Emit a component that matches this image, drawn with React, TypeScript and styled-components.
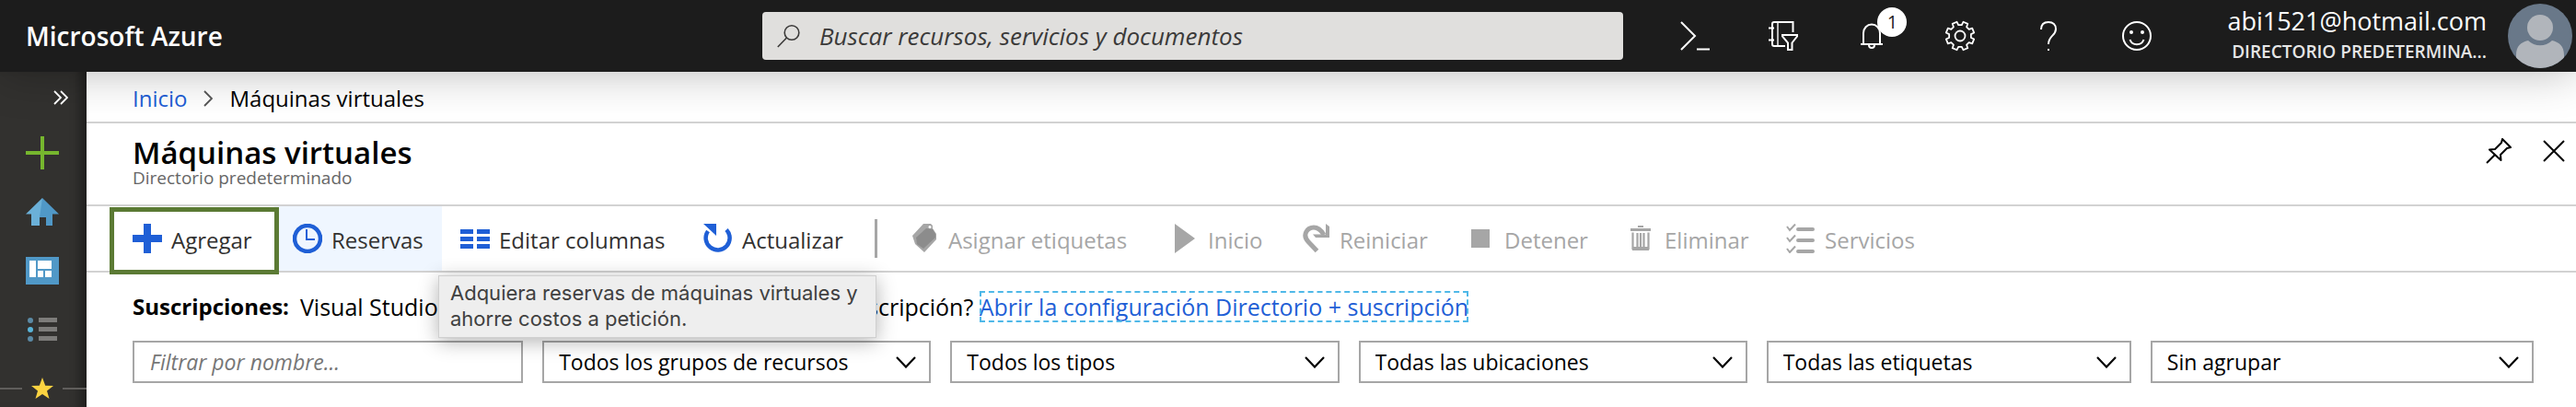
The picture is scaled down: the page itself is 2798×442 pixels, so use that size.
import React from "react";
import styled, { createGlobalStyle, css } from "styled-components";

const GlobalStyle = createGlobalStyle`
  *, *::before, *::after { box-sizing: border-box; }
  body {
    margin: 0;
    background: #ffffff;
    color: #000000;
    font-family: "Open Sans", "Noto Sans", sans-serif;
    font-size: 24px;
    line-height: 32px;
  }
  button, input, select { font: inherit; color: inherit; }
  svg { display: block; flex: none; }
`;

const Shell = styled.div`
  display: flex;
  flex-direction: column;
  height: 100vh;
  overflow: hidden;
`;

/* ---------- top bar ---------- */

const TopBar = styled.header`
  position: relative;
  z-index: 2;
  flex: none;
  display: flex;
  align-items: center;
  height: 78px;
  padding: 0 4px 0 28px;
  background: #1c1c1c;
  color: #ffffff;
  box-shadow: 0 0 50px rgba(0, 0, 0, 0.28);
`;

const Brand = styled.a`
  flex: 0 0 800px;
  color: inherit;
  font-size: 28px;
  font-weight: 600;
  text-decoration: none;
`;

const SearchBox = styled.label`
  flex: 1 1 0;
  display: flex;
  align-items: center;
  gap: 20px;
  height: 52px;
  padding: 0 16px;
  border-radius: 4px;
  background: #e0dfdd;
  color: #3b3a39;
`;

const SearchInput = styled.input`
  flex: 1;
  min-width: 0;
  padding: 0;
  border: 0;
  outline: 0;
  background: transparent;
  font-size: 26px;
  font-style: italic;
  &::placeholder { color: #3b3a39; opacity: 1; }
`;

const TopActions = styled.nav`
  flex: none;
  display: flex;
  margin-left: 30px;
`;

const TopButton = styled.button`
  position: relative;
  display: flex;
  align-items: center;
  justify-content: center;
  width: 96px;
  height: 76px;
  padding: 0;
  border: 0;
  background: transparent;
`;

const Badge = styled.span`
  position: absolute;
  top: 7px;
  right: 10px;
  width: 32px;
  height: 32px;
  border-radius: 50%;
  background: #ffffff;
  color: #1c1c1c;
  font-size: 20px;
  line-height: 31px;
  text-align: center;
`;

const Account = styled.button`
  flex: none;
  display: flex;
  align-items: center;
  gap: 23px;
  padding: 0;
  margin-left: 50px;
  border: 0;
  background: transparent;
  text-align: right;
`;

const AccountText = styled.span`
  display: flex;
  flex-direction: column;
`;

const Email = styled.span`
  font-size: 27px;
  line-height: 34px;
`;

const Directory = styled.span`
  color: #e6e6e6;
  font-size: 19px;
  font-weight: 600;
  line-height: 32px;
`;

/* ---------- side bar ---------- */

const Body = styled.div`
  flex: 1;
  display: flex;
  min-height: 0;
`;

const SideBar = styled.nav`
  flex: none;
  display: flex;
  flex-direction: column;
  width: 94px;
  background: #32312f;
  box-shadow: inset -14px 0 12px -8px rgba(0, 0, 0, 0.4);
`;

const SideButton = styled.button<{ $toggle?: boolean }>`
  flex: none;
  display: flex;
  align-items: center;
  justify-content: ${(p) => (p.$toggle ? "flex-end" : "center")};
  height: ${(p) => (p.$toggle ? 56 : 64)}px;
  padding: ${(p) => (p.$toggle ? "0 20px 0 0" : "0 2px 0 0")};
  border: 0;
  background: transparent;
`;

const FavoritesDivider = styled.div`
  flex: none;
  display: flex;
  align-items: center;
  gap: 9px;
  height: 64px;
  &::before, &::after {
    content: "";
    height: 2px;
    background: #605e5c;
  }
  &::before { width: 24px; }
  &::after { flex: 1; }
`;

/* ---------- blade ---------- */

const Blade = styled.main`
  flex: 1;
  min-width: 0;
`;

const Breadcrumb = styled.nav`
  display: flex;
  align-items: center;
  gap: 18px;
  height: 56px;
  padding: 4px 50px 0;
  border-bottom: 2px solid #d2d2d2;
`;

const BlueLink = styled.a<{ $focused?: boolean }>`
  color: #1f5fd6;
  text-decoration: none;
  ${(p) =>
    p.$focused &&
    css`
      outline: 2px dashed #4fb8e8;
      outline-offset: -2px;
    `}
`;

const TitleBar = styled.div`
  display: flex;
  justify-content: space-between;
  height: 90px;
  padding: 14px 12px 0 50px;
  border-bottom: 2px solid #d2d2d2;
`;

const Title = styled.h1`
  margin: 0;
  font-size: 33px;
  font-weight: 600;
  line-height: 36px;
`;

const Subtitle = styled.p`
  margin: 0;
  color: #666666;
  font-size: 19px;
  line-height: 18px;
`;

const BladeActions = styled.div`
  display: flex;
  align-items: flex-start;
  gap: 34px;
  padding-top: 2px;
`;

const IconButton = styled.button`
  display: flex;
  align-items: center;
  height: 28px;
  padding: 0;
  border: 0;
  background: transparent;
`;

const CommandBar = styled.div`
  display: flex;
  align-items: center;
  height: 72px;
  padding-left: 30px;
  border-bottom: 2px solid #d2d2d2;
`;

const Command = styled.button<{ $width: number; $hovered?: boolean; $marked?: boolean }>`
  position: relative;
  display: flex;
  align-items: center;
  gap: 10px;
  min-width: ${(p) => p.$width}px;
  height: 70px;
  padding: 0 20px;
  border: 0;
  background: ${(p) => (p.$hovered ? "#eff6ff" : "transparent")};
  color: #323130;
  white-space: nowrap;
  svg { color: #1f5fd6; }
  &:disabled { color: #a6a6a6; }
  &:disabled svg { color: #a6a6a6; }
  ${(p) =>
    p.$marked &&
    css`
      z-index: 1;
      &::after {
        content: "";
        position: absolute;
        inset: 1px -5px -4px;
        border: 5px solid #5b7a34;
      }
    `}
`;

const CommandLabel = styled.span`
  padding-top: 4px;
`;

const Separator = styled.span`
  width: 3px;
  height: 42px;
  margin: 0 15px 0 11px;
  background: #a6a6a6;
`;

const Tooltip = styled.div`
  position: absolute;
  z-index: 3;
  top: 75px;
  left: 178px;
  width: 476px;
  padding: 4px 12px 6px;
  border: 1px solid #cfcfcf;
  background: #eeeeee;
  box-shadow: 0 4px 20px rgba(0, 0, 0, 0.3);
  color: #404040;
  font-family: Inter, "Open Sans", sans-serif;
  font-size: 22px;
  line-height: 28px;
  text-align: left;
  white-space: normal;
`;

const CommandSlot = styled.div`
  position: relative;
`;

const Content = styled.section`
  padding: 20px 46px 0 50px;
`;

const Subscriptions = styled.p`
  display: flex;
  margin: 0;
  font-size: 25px;
  line-height: 34px;
  white-space: pre;
  strong { margin-right: 12px; font-size: 24px; }
`;

const Filters = styled.form`
  display: grid;
  grid-template-columns: 424fr 422fr 422fr 422fr 396fr 416fr;
  gap: 21px;
  margin-top: 20px;
`;

const FilterInput = styled.input`
  min-width: 0;
  height: 46px;
  padding: 0 17px;
  border: 2px solid #a6a6a6;
  border-radius: 0;
  background: #ffffff;
  font-size: 23px;
  font-style: italic;
  &::placeholder { color: #767676; opacity: 1; }
`;

const SelectWrap = styled.div`
  display: grid;
  align-items: center;
  > * { grid-area: 1 / 1; }
  svg { justify-self: end; margin-right: 16px; pointer-events: none; }
`;

const FilterSelect = styled.select`
  appearance: none;
  width: 100%;
  height: 46px;
  padding: 0 44px 0 16px;
  border: 2px solid #a6a6a6;
  border-radius: 0;
  background: #ffffff;
  font-size: 23px;
`;

/* ---------- icons ---------- */

const SearchIcon = () => (
  <svg width="26" height="26" viewBox="0 0 26 26" fill="none" stroke="#3b3a39" strokeWidth="1.6">
    <circle cx="16" cy="9.5" r="7.8" />
    <path d="M10.5 15 L0.8 25" />
  </svg>
);

const ShellIcon = () => (
  <svg width="32" height="32" viewBox="0 0 32 32" fill="none" stroke="#fff" strokeWidth="2">
    <path d="M1 1 L16 16 L1 31 M18 30.5 H32" />
  </svg>
);

const DirectoryIcon = () => (
  <svg width="32" height="32" viewBox="0 0 32 32" fill="none" stroke="#fff" strokeWidth="2">
    <path d="M26.500 12 V1 H6 Q4 1 4 3 V25 Q4 27 6 27 H18" />
    <path d="M10 1 V27" strokeWidth="1.400" />
    <path d="M0 7.500 H6 M0 20.500 H6" />
    <path d="M15 15 H31 V16.500 L25.500 23.500 V31 H21 V23.500 L15 16.500 Z" />
  </svg>
);

const BellIcon = () => (
  <svg width="24" height="30" viewBox="0 0 24 30" fill="none" stroke="#fff" strokeWidth="2">
    <path d="M3 24 V12 A9 9.500 0 0 1 21 12 V24 M0 24 H24" />
    <path d="M9 25 A3 3 0 0 0 15 25" />
  </svg>
);

const gearPath = (() => {
  const points: string[] = [];
  for (let i = 0; i < 8; i++) {
    const base = (i * Math.PI) / 4 + Math.PI / 8;
    [[-0.24, 12], [-0.17, 15.6], [0.17, 15.6], [0.24, 12]].forEach(([d, r]) => {
      points.push(`${(17 + r * Math.sin(base + d)).toFixed(2)} ${(17 + r * Math.cos(base + d)).toFixed(2)}`);
    });
  }
  return `M${points.join("L")}Z`;
})();

const GearIcon = () => (
  <svg width="34" height="34" viewBox="0 0 34 34" fill="none" stroke="#fff" strokeWidth="1.800" strokeLinejoin="round">
    <path d={gearPath} />
    <circle cx="17" cy="17" r="5.500" />
  </svg>
);

const HelpIcon = () => (
  <svg width="18" height="32" viewBox="0 0 18 32" fill="none" stroke="#fff" strokeWidth="2">
    <path d="M1 9 C1 4 4 1 9 1 C14 1 17 4 17 8.500 C17 16 9 15.500 9 25" />
    <path d="M9 30 V32" />
  </svg>
);

const SmileIcon = () => (
  <svg width="32" height="32" viewBox="0 0 32 32" fill="none" stroke="#fff" strokeWidth="2">
    <circle cx="16" cy="16" r="15" />
    <path d="M8.500 20 C11 27 21 27 23.500 20" />
    <circle cx="10" cy="12" r="2" fill="#fff" stroke="none" />
    <circle cx="22" cy="12" r="2" fill="#fff" stroke="none" />
  </svg>
);

const Avatar = () => (
  <svg width="70" height="70" viewBox="0 0 70 70">
    <defs>
      <clipPath id="avatar-round"><circle cx="35" cy="35" r="35" /></clipPath>
    </defs>
    <g clipPath="url(#avatar-round)">
      <rect width="70" height="70" fill="#697889" />
      <path d="M9 70 V56 C9 46 14 42 22 40 C29 47 41 47 48 40 C56 42 61 46 61 56 V70 Z" fill="#b1b5bb" />
      <circle cx="35" cy="26" r="14" fill="#b1b5bb" />
    </g>
  </svg>
);

const ExpandIcon = () => (
  <svg width="16" height="16" viewBox="0 0 16 16" fill="none" stroke="#fff" strokeWidth="1.800">
    <path d="M1 1 L8 8 L1 15 M8 1 L15 8 L8 15" />
  </svg>
);

const CreateIcon = () => (
  <svg width="36" height="36" viewBox="0 0 36 36" fill="#76b62e">
    <path d="M16 0h4v16h16v4H20v16h-4V20H0v-4h16z" />
  </svg>
);

const HomeIcon = () => (
  <svg width="36" height="30" viewBox="0 0 36 30">
    <path d="M18 0 L0 17.500 H6 V30 H15 V21 H18 Z" fill="#6bb0d8" />
    <path d="M18 0 L36 17.500 H29 V30 H22 V21 H15 Z" fill="#5098c7" />
  </svg>
);

const DashboardIcon = () => (
  <svg width="36" height="30" viewBox="0 0 36 30">
    <path d="M0 0h36v30H0z" fill="#5098c7" />
    <path d="M4 4h7v18H4zM13 4h15v9H13zM13 15h6v7h-6zM21 15h7v7h-7z" fill="#fff" />
  </svg>
);

const ListIcon = () => (
  <svg width="32" height="26" viewBox="0 0 32 26">
    <circle cx="3" cy="3" r="3" fill="#5b8aa5" />
    <circle cx="3" cy="13" r="3" fill="#59b4d9" />
    <circle cx="3" cy="23" r="3" fill="#5b8aa5" />
    <path d="M12 0h20v5H12zM12 10h20v5H12zM12 20h20v5H12z" fill="#7d7c7a" />
  </svg>
);

const StarIcon = () => (
  <svg width="26" height="24" viewBox="0 0 26 24" fill="#fbd341">
    <path d="M13 0 L16.200 8.700 L25 9 L18 14.500 L20.500 23 L13 18 L5.500 23 L8 14.500 L1 9 L9.800 8.700 Z" />
  </svg>
);

const CrumbIcon = () => (
  <svg width="10" height="18" viewBox="0 0 10 18" fill="none" stroke="#555" strokeWidth="1.800">
    <path d="M1 1 L9 9 L1 17" />
  </svg>
);

const PinIcon = () => (
  <svg width="28" height="28" viewBox="0 0 28 28" fill="none" stroke="#000" strokeWidth="2" strokeLinejoin="round">
    <path d="M18 1 L27 10 L23 11 L16 18 L16.500 24 L4 12.500 L10 12 L17 5 Z" />
    <path d="M10 18 L1 27" />
  </svg>
);

const CloseIcon = () => (
  <svg width="24" height="24" viewBox="0 0 24 24" fill="none" stroke="#000" strokeWidth="2">
    <path d="M1 1 L23 23 M23 1 L1 23" />
  </svg>
);

const DownIcon = () => (
  <svg width="22" height="13" viewBox="0 0 22 13" fill="none" stroke="#000" strokeWidth="2.200">
    <path d="M1 1 L11 11.500 L21 1" />
  </svg>
);

const CommandIcon = ({ children }: { children: React.ReactNode }) => (
  <svg width="32" height="32" viewBox="0 0 32 32" fill="currentColor">{children}</svg>
);

const AddGlyph = () => <path d="M12 0h8v12h12v8H20v12h-8V20H0v-8h12z" />;
const ClockGlyph = () => (
  <g fill="none" stroke="currentColor">
    <circle cx="16" cy="16" r="14" strokeWidth="4.500" />
    <path d="M15 6 V17 H24" strokeWidth="2" />
  </g>
);
const ColumnsGlyph = () => (
  <path d="M0 6h14v5H0zM18 6h14v5H18zM0 14h14v5H0zM18 14h14v5H18zM0 22h14v5H0zM18 22h14v5H18z" />
);
const RefreshGlyph = () => (
  <g>
    <path d="M25 6.500 A13 13 0 1 1 5 8" fill="none" stroke="currentColor" strokeWidth="4.500" />
    <path d="M0 0 H14 V13 Z" />
  </g>
);
const TagGlyph = () => (
  <g>
    <path d="M15 0 H23 L25 2 V5 L29 11 V17 L16 31 L6 22 L3 13 Z" />
    <path d="M18 5 L25 6 L28 11 V15 L15 27 L8 22 L7 15 Z" fill="#8c8c8c" />
    <circle cx="22" cy="3.500" r="1.500" fill="#fff" />
  </g>
);
const PlayGlyph = () => <path d="M6 0 L28 16 L6 32 Z" />;
const RestartGlyph = () => (
  <g>
    <path d="M17.500 29.500 L8 19.500 C1 12 7 4 14 4 C19 4 22 7 25 12" fill="none" stroke="currentColor" strokeWidth="5" />
    <path d="M27 0 L31 3 V15 H16 L13 11.500 H27 Z" />
  </g>
);
const StopGlyph = () => <path d="M6 6h20v20H6z" />;
const TrashGlyph = () => (
  <g>
    <path d="M13 2h6v2h-6zM5 5h22v3H5z" />
    <path d="M7.500 9.500 V27 H24.500 V9.500 M12.500 10 V26 M16 10 V26 M19.500 10 V26" fill="none" stroke="currentColor" strokeWidth="2.200" />
    <path d="M7 25h18v4H7z" />
  </g>
);
const ServicesGlyph = () => (
  <g fill="none" stroke="currentColor">
    <path d="M1 3 L4 7 L10 0.500 M1 15 L4 19 L10 12.500 M1 27 L4 31 L10 24.500" strokeWidth="2" />
    <path d="M13 6 H29 M13 18 H29 M13 30 H29" strokeWidth="4" strokeLinecap="round" />
  </g>
);

const disabledCommands = [
  { label: "Asignar etiquetas", width: 282, Glyph: TagGlyph },
  { label: "Inicio", width: 143, Glyph: PlayGlyph },
  { label: "Reiniciar", width: 179, Glyph: RestartGlyph },
  { label: "Detener", width: 174, Glyph: StopGlyph },
  { label: "Eliminar", width: 174, Glyph: TrashGlyph },
  { label: "Servicios", width: 180, Glyph: ServicesGlyph },
];

const filterOptions = [
  "Todos los grupos de recursos",
  "Todos los tipos",
  "Todas las ubicaciones",
  "Todas las etiquetas",
  "Sin agrupar",
];

export default function App() {
  return (
    <Shell>
      <GlobalStyle />
      <TopBar>
        <Brand href="#home">Microsoft Azure</Brand>
        <SearchBox>
          <SearchIcon />
          <SearchInput
            type="text"
            aria-label="Buscar recursos, servicios y documentos"
            placeholder="Buscar recursos, servicios y documentos"
          />
        </SearchBox>
        <TopActions>
          <TopButton aria-label="Cloud Shell"><ShellIcon /></TopButton>
          <TopButton aria-label="Directorio y suscripción"><DirectoryIcon /></TopButton>
          <TopButton aria-label="Notificaciones"><BellIcon /><Badge>1</Badge></TopButton>
          <TopButton aria-label="Configuración"><GearIcon /></TopButton>
          <TopButton aria-label="Ayuda"><HelpIcon /></TopButton>
          <TopButton aria-label="Comentarios"><SmileIcon /></TopButton>
        </TopActions>
        <Account>
          <AccountText>
            <Email>abi1521@hotmail.com</Email>
            <Directory>DIRECTORIO PREDETERMINA...</Directory>
          </AccountText>
          <Avatar />
        </Account>
      </TopBar>
      <Body>
        <SideBar>
          <SideButton $toggle aria-label="Expandir menú"><ExpandIcon /></SideButton>
          <SideButton aria-label="Crear un recurso"><CreateIcon /></SideButton>
          <SideButton aria-label="Inicio"><HomeIcon /></SideButton>
          <SideButton aria-label="Panel"><DashboardIcon /></SideButton>
          <SideButton aria-label="Todos los servicios"><ListIcon /></SideButton>
          <FavoritesDivider><StarIcon /></FavoritesDivider>
        </SideBar>
        <Blade>
          <Breadcrumb>
            <BlueLink href="#inicio">Inicio</BlueLink>
            <CrumbIcon />
            <span>Máquinas virtuales</span>
          </Breadcrumb>
          <TitleBar>
            <div>
              <Title>Máquinas virtuales</Title>
              <Subtitle>Directorio predeterminado</Subtitle>
            </div>
            <BladeActions>
              <IconButton aria-label="Anclar"><PinIcon /></IconButton>
              <IconButton aria-label="Cerrar"><CloseIcon /></IconButton>
            </BladeActions>
          </TitleBar>
          <CommandBar>
            <Command $width={174} $marked>
              <CommandIcon><AddGlyph /></CommandIcon>
              <CommandLabel>Agregar</CommandLabel>
            </Command>
            <CommandSlot>
              <Command $width={182} $hovered aria-describedby="reservas-tip">
                <CommandIcon><ClockGlyph /></CommandIcon>
                <CommandLabel>Reservas</CommandLabel>
              </Command>
              <Tooltip id="reservas-tip" role="tooltip">
                Adquiera reservas de máquinas virtuales y ahorre costos a petición.
              </Tooltip>
            </CommandSlot>
            <Command $width={264}>
              <CommandIcon><ColumnsGlyph /></CommandIcon>
              <CommandLabel>Editar columnas</CommandLabel>
            </Command>
            <Command $width={195}>
              <CommandIcon><RefreshGlyph /></CommandIcon>
              <CommandLabel>Actualizar</CommandLabel>
            </Command>
            <Separator />
            {disabledCommands.map(({ label, width, Glyph }) => (
              <Command key={label} $width={width} disabled>
                <CommandIcon><Glyph /></CommandIcon>
                <CommandLabel>{label}</CommandLabel>
              </Command>
            ))}
          </CommandBar>
          <Content>
            <Subscriptions>
              <strong>Suscripciones:</strong>
              <span>Visual Studio Professional con MSDN – ¿No ve una suscripción? </span>
              <BlueLink $focused href="#config">Abrir la configuración Directorio + suscripción</BlueLink>
            </Subscriptions>
            <Filters>
              <FilterInput type="text" aria-label="Filtrar por nombre" placeholder="Filtrar por nombre..." />
              {filterOptions.map((option) => (
                <SelectWrap key={option}>
                  <FilterSelect aria-label={option} defaultValue={option}>
                    <option>{option}</option>
                  </FilterSelect>
                  <DownIcon />
                </SelectWrap>
              ))}
            </Filters>
          </Content>
        </Blade>
      </Body>
    </Shell>
  );
}
